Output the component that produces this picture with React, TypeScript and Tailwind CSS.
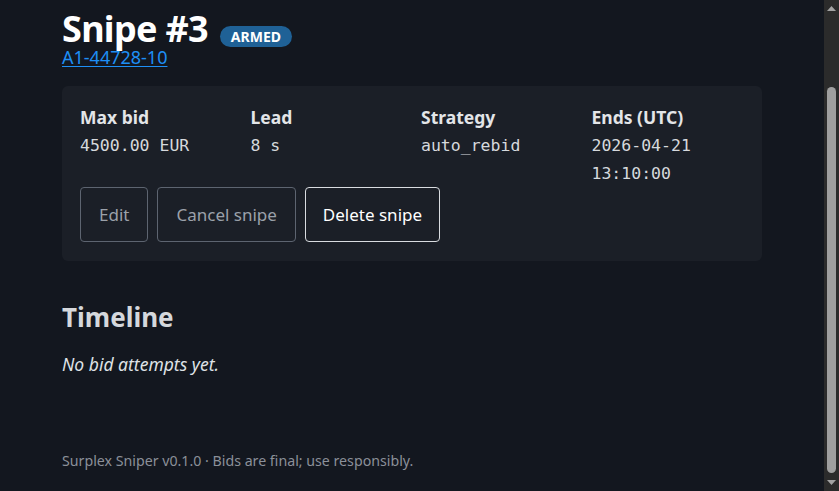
import React from 'react';

const fields = [
    { label: 'Max bid', value: '4500.00 EUR' },
    { label: 'Lead', value: '8 s' },
    { label: 'Strategy', value: 'auto_rebid' },
    { label: 'Ends (UTC)', value: '2026-04-21 13:10:00' },
];

// window scrollbar as it appears in the screenshot (page scrolled to its end)
const Scrollbar: React.FC = () => (
    <aside className="w-[15px] shrink-0 bg-[#2b2b2b] flex flex-col items-center">
        <div className="h-[17px] flex items-center justify-center">
            <svg width="9" height="5" viewBox="0 0 9 5"><path d="M4.5 0L9 5H0z" fill="#a3a3a3" /></svg>
        </div>
        <div className="flex-1 flex flex-col justify-end pb-[1px]">
            <div className="h-[386px] w-[9px] rounded-full bg-[#9f9f9f]" />
        </div>
        <div className="h-[17px] flex items-center justify-center">
            <svg width="9" height="5" viewBox="0 0 9 5"><path d="M0 0H9L4.5 5z" fill="#a3a3a3" /></svg>
        </div>
    </aside>
);

const App: React.FC = () => {
    return (
        <div className="h-screen flex bg-[#13171f] text-[#e6e8eb] font-['Segoe_UI','Noto_Sans',sans-serif]">
            <div className="flex-1 overflow-hidden">
                <main className="max-w-[700px] mx-auto pt-[10px]">
                    <div className="flex items-start gap-3">
                        <h1 className="text-[36px] leading-[37px] tracking-[-0.7px] font-bold text-white">Snipe #3</h1>
                        <span className="mt-[16px] px-[11px] h-[21px] leading-[21px] rounded-full bg-[#1f6196] text-white text-[14px] font-bold">
                            ARMED
                        </span>
                    </div>
                    <a href="#" className="block w-fit text-[18px] leading-[21px] text-[#1e8ff5] underline underline-offset-2">
                        A1-44728-10
                    </a>

                    <section className="mt-[18px] bg-[#1b1f27] rounded-[6px] px-[18px] pt-[19px] pb-[19px]">
                        <div className="grid grid-cols-4 gap-x-[18px]">
                            {fields.map(f => (
                                <div key={f.label}>
                                    <div className="font-bold text-[17.5px] leading-[24px] text-[#e3e5e8]">{f.label}</div>
                                    <div className="mt-[3px] font-['DejaVu_Sans_Mono',monospace] text-[16.5px] leading-[28px] text-[#d6d9dd]">
                                        {f.value}
                                    </div>
                                </div>
                            ))}
                        </div>
                        <div className="mt-[-1px] flex gap-[9px]">
                            <button className="h-[55px] px-[18px] rounded-[4px] border border-[#5d6470] text-[17px] text-[#9ba1aa]">
                                Edit
                            </button>
                            <button className="h-[55px] px-[18px] rounded-[4px] border border-[#5d6470] text-[17px] text-[#9ba1aa]">
                                Cancel snipe
                            </button>
                            <button className="h-[55px] px-[17px] rounded-[4px] border border-[#d9dce0] text-[17px] text-white">
                                Delete snipe
                            </button>
                        </div>
                    </section>

                    <h2 className="mt-[40px] text-[26px] leading-[32px] font-bold text-[#d5d8dc]">Timeline</h2>
                    <p className="mt-[19px] italic text-[17.5px] leading-[24px] text-[#dfe2e6]">No bid attempts yet.</p>

                    <footer className="mt-[75px] pb-[20px] text-[14.2px] leading-[20px] text-[#8b9099]">
                        Surplex Sniper v0.1.0 · Bids are final; use responsibly.
                    </footer>
                </main>
            </div>
            <Scrollbar />
        </div>
    );
};

export default App;
